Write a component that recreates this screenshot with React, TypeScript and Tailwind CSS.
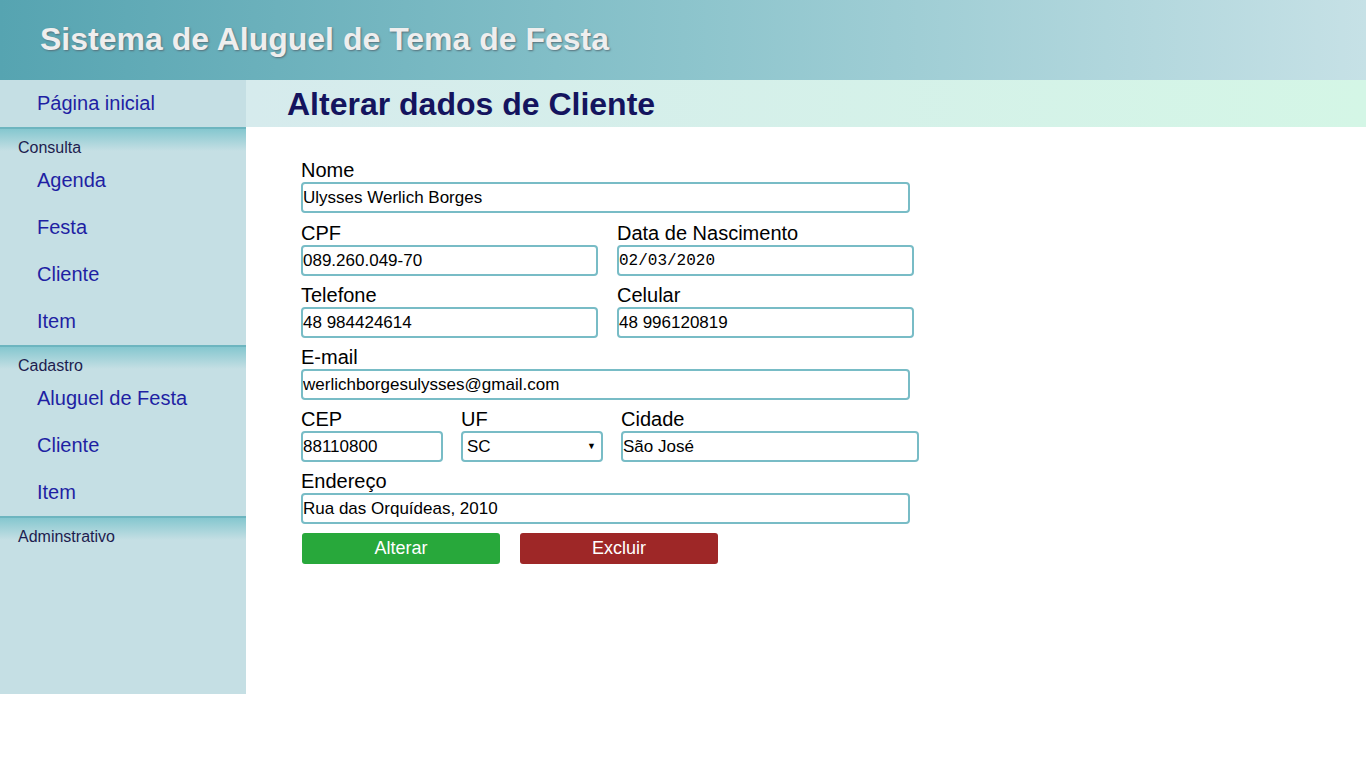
import React from 'react'

const font = { fontFamily: '"Liberation Sans", Arial, sans-serif' }

interface FieldProps {
  label: string;
  value: string;
  width: string;
  mono?: boolean;
  extra?: string;
}

const Field: React.FC<FieldProps> = ({ label, value, width, mono, extra }) => (
  <label className={`flex flex-col ${width} ${extra ?? ''}`}>
    <span className="text-[20px] leading-[23px] text-black">{label}</span>
    <input
      readOnly
      value={value}
      className={`h-[31px] w-full rounded-[4px] border-2 border-[#78bcc6] bg-white px-0 text-black outline-none ${mono ? 'font-["Liberation_Mono",monospace] text-[16px]' : 'text-[17px]'}`}
    />
  </label>
)

const SectionLabel: React.FC<{ label: string }> = ({ label }) => (
  <div className="border-t-2 border-[#6db5bf] bg-[linear-gradient(to_bottom,#85c7cf,#c5dfe4_22px)] h-[30px] pt-[10px] pl-[18px] text-[16px] leading-[18px] text-[#1d1d4f]">
    {label}
  </div>
)

const NavLink: React.FC<{ label: string }> = ({ label }) => (
  <div className="h-[47px] flex items-center pb-[2px] pl-[37px] text-[20px] text-[#1f1fa3]">
    {label}
  </div>
)

const App: React.FC = () => {
  return (
    <div className="min-h-[768px] bg-white" style={font}>
      {/* topo */}
      <header className="h-[80px] flex items-center pl-[40px] bg-[linear-gradient(to_right,#56a4b1,#8cc4cc_50%,#c6e1e6)]">
        <h1 className="text-[32px] font-bold text-[#eeeeee] [text-shadow:1px_1px_2px_#55707a] -mt-[3px]">
          Sistema de Aluguel de Tema de Festa
        </h1>
      </header>

      <div className="flex">
        {/* menu lateral */}
        <nav className="w-[246px] h-[614px] shrink-0 bg-[#c5dfe4]">
          <NavLink label="Página inicial" />
          <SectionLabel label="Consulta" />
          <NavLink label="Agenda" />
          <NavLink label="Festa" />
          <NavLink label="Cliente" />
          <NavLink label="Item" />
          <SectionLabel label="Cadastro" />
          <NavLink label="Aluguel de Festa" />
          <NavLink label="Cliente" />
          <NavLink label="Item" />
          <SectionLabel label="Adminstrativo" />
        </nav>

        {/* conteúdo */}
        <main className="flex-1">
          <div className="h-[47px] flex items-center pl-[41px] bg-[linear-gradient(to_right,#d6ebed,#d4f6e6)]">
            <h2 className="text-[32px] font-bold text-[#14145e]">Alterar dados de Cliente</h2>
          </div>

          <form className="pl-[55px] pt-[32px] flex flex-col gap-[8px]">
            <Field label="Nome" value="Ulysses Werlich Borges" width="w-[609px]" extra="mb-[1px]" />
            <div className="flex gap-[19px]">
              <Field label="CPF" value="089.260.049-70" width="w-[297px]" />
              <Field label="Data de Nascimento" value="02/03/2020" width="w-[297px]" mono />
            </div>
            <div className="flex gap-[19px]">
              <Field label="Telefone" value="48 984424614" width="w-[297px]" />
              <Field label="Celular" value="48 996120819" width="w-[297px]" />
            </div>
            <Field label="E-mail" value="werlichborgesulysses@gmail.com" width="w-[609px]" />
            <div className="flex gap-[18px]">
              <Field label="CEP" value="88110800" width="w-[142px]" />
              <label className="flex flex-col w-[142px]">
                <span className="text-[20px] leading-[23px] text-black">UF</span>
                <div className="h-[31px] rounded-[4px] border-2 border-[#78bcc6] bg-white flex items-center justify-between pl-[4px] pr-[5px] text-[17px] text-black">
                  <span>SC</span>
                  <span className="text-[9px]">▼</span>
                </div>
              </label>
              <Field label="Cidade" value="São José" width="w-[298px]" />
            </div>
            <Field label="Endereço" value="Rua das Orquídeas, 2010" width="w-[609px]" />
            <div className="flex gap-[20px] pl-[1px] pt-[1px]">
              <button type="button" className="w-[198px] h-[31px] rounded-[3px] bg-[#28a83b] text-white text-[18px]">
                Alterar
              </button>
              <button type="button" className="w-[198px] h-[31px] rounded-[3px] bg-[#9e2727] text-white text-[18px]">
                Excluir
              </button>
            </div>
          </form>
        </main>
      </div>
    </div>
  )
}

export default App
